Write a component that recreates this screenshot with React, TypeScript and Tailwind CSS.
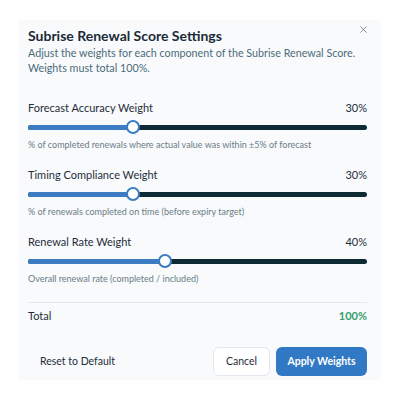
import { X } from "lucide-react";

type Weight = {
  label: string;
  value: number;
  help: string;
};

const weights: Weight[] = [
  {
    label: "Forecast Accuracy Weight",
    value: 30,
    help: "% of completed renewals where actual value was within ±5% of forecast",
  },
  {
    label: "Timing Compliance Weight",
    value: 30,
    help: "% of renewals completed on time (before expiry target)",
  },
  {
    label: "Renewal Rate Weight",
    value: 40,
    help: "Overall renewal rate (completed / included)",
  },
];

const THUMB = 14;

function WeightSlider({ value }: { value: number }) {
  // keep the thumb inside the track, like radix does
  const center = `calc(${THUMB / 2}px + (100% - ${THUMB}px) * ${value / 100})`;
  return (
    <div className="relative flex h-[14px] items-center">
      <div className="relative h-[5px] w-full overflow-hidden rounded-full bg-[#0d2a35]">
        <div
          className="absolute inset-y-0 left-0 bg-[#3b7cc2]"
          style={{ width: center }}
        />
      </div>
      <div
        className="absolute top-0 h-[14px] w-[14px] -translate-x-1/2 rounded-full border-2 border-[#3b7cc2] bg-white"
        style={{ left: center }}
      />
    </div>
  );
}

function WeightRow({ w }: { w: Weight }) {
  return (
    <div>
      <div className="flex h-[16px] items-center justify-between text-[11px] text-[#1f2d3a]">
        <span>{w.label}</span>
        <span>{w.value}%</span>
      </div>
      <div className="mt-[4px]">
        <WeightSlider value={w.value} />
      </div>
      <p className="mt-[4px] text-[9px] leading-[13px] text-[#6b7c86]">
        {w.help}
      </p>
    </div>
  );
}

export default function App() {
  const total = weights.reduce((s, w) => s + w.value, 0);

  return (
    <div
      className="h-[400px] w-[400px] bg-white pl-[18px] pt-[20px]"
      style={{ fontFamily: "Lato, 'Noto Sans', sans-serif" }}
    >
      <div className="relative h-[360px] w-[363px] bg-[#f8fafc] pl-[10px] pr-[14px] pt-[6px]">
        <button className="absolute right-[11px] top-[2px] flex h-[14px] w-[14px] items-center justify-center text-[#5b6470]">
          <X size={11} strokeWidth={1.6} />
        </button>

        <h2 className="text-[14px] font-bold leading-[19px] text-[#1c2b38]">
          Subrise Renewal Score Settings
        </h2>
        <p className="text-[10.75px] leading-[15px] text-[#4d6b7a]">
          Adjust the weights for each component of the Subrise Renewal Score.
          <br />
          Weights must total 100%.
        </p>

        <div className="mt-[25px] flex flex-col gap-[16px]">
          {weights.map((w) => (
            <WeightRow key={w.label} w={w} />
          ))}
        </div>

        <div className="mt-[17px] border-t border-[#e2e8f0]" />
        <div className="mt-[5px] flex h-[16px] items-center justify-between text-[11px]">
          <span className="text-[#1f2d3a]">Total</span>
          <span className="font-bold text-[#34a06c]">{total}%</span>
        </div>

        <div className="mt-[23px] flex items-center">
          <button className="h-[29px] rounded-md px-[12px] text-[10.5px] text-[#1f2d3a]">
            Reset to Default
          </button>
          <div className="ml-auto flex gap-[6px]">
            <button className="h-[29px] w-[57px] rounded-md border border-[#e2e8f0] bg-white text-[10.5px] text-[#1f2d3a]">
              Cancel
            </button>
            <button className="h-[29px] w-[91px] rounded-md bg-[#3179c4] text-[10.5px] font-bold text-white">
              Apply Weights
            </button>
          </div>
        </div>
      </div>
    </div>
  );
}
